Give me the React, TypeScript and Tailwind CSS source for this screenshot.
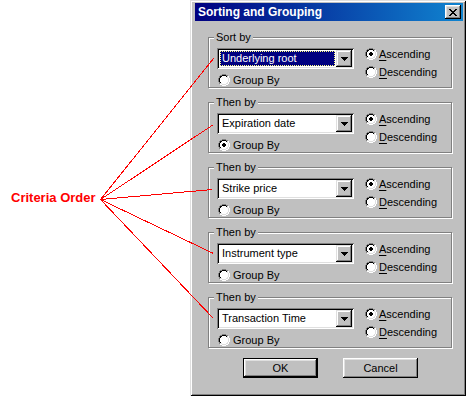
import React from "react";

const RADIO = [
  "....GGGG....",
  "..GGKKKKGG..",
  ".GKKWWWWKLW.",
  ".GKWWWWWWLW.",
  "GKWWWWWWWWLW",
  "GKWWWWWWWWLW",
  "GKWWWWWWWWLW",
  "GKWWWWWWWWLW",
  ".GKWWWWWWLW.",
  ".GLLWWWWLLW.",
  "..WWLLLLWW..",
  "....WWWW....",
];
const DOT = [
  [5, 4], [6, 4],
  [4, 5], [5, 5], [6, 5], [7, 5],
  [4, 6], [5, 6], [6, 6], [7, 6],
  [5, 7], [6, 7],
];
const COLORS: Record<string, string> = { G: "#808080", K: "#000000", W: "#ffffff", L: "#dfdfdf" };

function Pixels({ rows, w, h }: { rows: string[]; w: number; h: number }) {
  const rects: React.ReactNode[] = [];
  rows.forEach((row, y) =>
    row.split("").forEach((c, x) => {
      if (c !== ".") rects.push(<rect key={`${x}-${y}`} x={x} y={y} width={1} height={1} fill={COLORS[c]} />);
    })
  );
  return (
    <svg width={w} height={h} viewBox={`0 0 ${w} ${h}`} shapeRendering="crispEdges" className="block shrink-0">
      {rects}
    </svg>
  );
}

function Radio({ checked }: { checked?: boolean }) {
  return (
    <svg width={12} height={12} viewBox="0 0 12 12" shapeRendering="crispEdges" className="block shrink-0">
      {RADIO.map((row, y) =>
        row.split("").map((c, x) =>
          c !== "." ? <rect key={`${x}-${y}`} x={x} y={y} width={1} height={1} fill={COLORS[c]} /> : null
        )
      )}
      {checked && DOT.map(([x, y]) => <rect key={`d${x}-${y}`} x={x} y={y} width={1} height={1} fill="#000" />)}
    </svg>
  );
}

const ARROW = ["KKKKKKK", ".KKKKK.", "..KKK..", "...K..."];
const XGLYPH = ["KK....KK", ".KK..KK.", "..KKKK..", "...KK...", "..KKKK..", ".KK..KK.", "KK....KK"];

function Combo({ value, selected }: { value: string; selected?: boolean }) {
  return (
    <div className="flex w-[137px] h-[21px] bg-white p-[2px] shadow-[inset_1px_1px_0_#808080,inset_-1px_-1px_0_#ffffff,inset_2px_2px_0_#000000,inset_-2px_-2px_0_#dfdfdf]">
      <div className="flex-1 p-[1px] flex">
        {selected ? (
          <div className="flex-1 flex items-center bg-[#000080] border border-dotted border-[#ffff80] pl-[1px] text-white leading-[13px]">
            {value}
          </div>
        ) : (
          <div className="flex-1 flex items-center pl-[2px] leading-[13px]">{value}</div>
        )}
      </div>
      <div className="w-[16px] h-[17px] bg-[#c0c0c0] flex items-center justify-center shadow-[inset_-1px_-1px_0_#000000,inset_1px_1px_0_#dfdfdf,inset_-2px_-2px_0_#808080,inset_2px_2px_0_#ffffff]">
        <Pixels rows={ARROW} w={7} h={4} />
      </div>
    </div>
  );
}

function Underlined({ text }: { text: string }) {
  return (
    <span className="leading-[13px] whitespace-nowrap">
      <span className="underline underline-offset-[2px]">{text[0]}</span>
      {text.slice(1)}
    </span>
  );
}

function Group({ label, value, selected, groupBy }: { label: string; value: string; selected?: boolean; groupBy?: boolean }) {
  return (
    <div className="relative w-[244px] h-[51px] border border-[#808080] shadow-[inset_1px_1px_0_#ffffff,1px_1px_0_#ffffff]">
      <div className="absolute left-[5px] top-[-7px] bg-[#c0c0c0] px-[2px] leading-[13px] whitespace-nowrap">{label}</div>
      <div className="flex pl-[8px] pt-[10px]">
        <div className="flex flex-col w-[137px]">
          <Combo value={value} selected={selected} />
          <div className="flex items-center h-[12px] mt-[5px] ml-[1px]">
            <Radio checked={groupBy} />
            <span className="ml-[3px] leading-[13px] whitespace-nowrap">Group By</span>
          </div>
        </div>
        <div className="flex flex-col gap-[6px] ml-[11px]">
          <div className="flex items-center h-[12px]">
            <Radio checked />
            <span className="ml-[2px]">
              <Underlined text="Ascending" />
            </span>
          </div>
          <div className="flex items-center h-[12px]">
            <Radio />
            <span className="ml-[2px]">
              <Underlined text="Descending" />
            </span>
          </div>
        </div>
      </div>
    </div>
  );
}

function Dialog() {
  return (
    <div className="w-[276px] h-[396px] shrink-0 bg-[#c0c0c0] pt-[3px] pl-[5px] pr-[3px] flex flex-col shadow-[inset_1px_1px_0_#dfdfdf,inset_-1px_-1px_0_#000000,inset_2px_2px_0_#ffffff,inset_-2px_-2px_0_#808080]">
      <div className="h-[18px] flex items-center justify-between bg-[linear-gradient(to_right,#000080,#1084d0)]">
        <span className="pl-[3px] text-white font-bold text-[12px] leading-[14px] whitespace-nowrap">Sorting and Grouping</span>
        <div className="mr-[2px] w-[16px] h-[14px] bg-[#c0c0c0] flex items-center justify-center shadow-[inset_-1px_-1px_0_#000000,inset_1px_1px_0_#ffffff,inset_-2px_-2px_0_#808080,inset_2px_2px_0_#dfdfdf]">
          <Pixels rows={XGLYPH} w={8} h={7} />
        </div>
      </div>
      <div className="flex flex-col gap-[14px] ml-[13px] mt-[16px]">
        <Group label="Sort by" value="Underlying root" selected />
        <Group label="Then by" value="Expiration date" groupBy />
        <Group label="Then by" value="Strike price" />
        <Group label="Then by" value="Instrument type" />
        <Group label="Then by" value="Transaction Time" />
      </div>
      <div className="flex mt-[10px] ml-[48px] gap-[25px]">
        <div className="w-[75px] h-[20px] border border-black flex items-center justify-center shadow-[inset_-1px_-1px_0_#000000,inset_1px_1px_0_#ffffff,inset_-2px_-2px_0_#808080,inset_2px_2px_0_#dfdfdf]">
          OK
        </div>
        <div className="w-[75px] h-[20px] flex items-center justify-center shadow-[inset_-1px_-1px_0_#000000,inset_1px_1px_0_#ffffff,inset_-2px_-2px_0_#808080,inset_2px_2px_0_#dfdfdf]">
          Cancel
        </div>
      </div>
    </div>
  );
}

export default function App() {
  const ends: [number, number][] = [
    [213, 58],
    [213, 124],
    [212, 189],
    [213, 253],
    [213, 318],
  ];
  return (
    <div className="relative flex w-[468px] h-[396px] bg-white text-black text-[11px] font-['Liberation_Sans',Arial,sans-serif]">
      <div className="w-[190px] shrink-0 pt-[190px] pl-[11px]">
        <span className="text-[13px] leading-[15px] font-bold text-[#ff0000] whitespace-nowrap">Criteria Order</span>
      </div>
      <Dialog />
      <svg className="absolute inset-0 pointer-events-none" width={468} height={396} shapeRendering="crispEdges">
        {ends.map(([x, y], i) => (
          <line key={i} x1={100.5} y1={199.5} x2={x + 0.5} y2={y + 0.5} stroke="#ff0000" strokeWidth={1} />
        ))}
      </svg>
    </div>
  );
}
